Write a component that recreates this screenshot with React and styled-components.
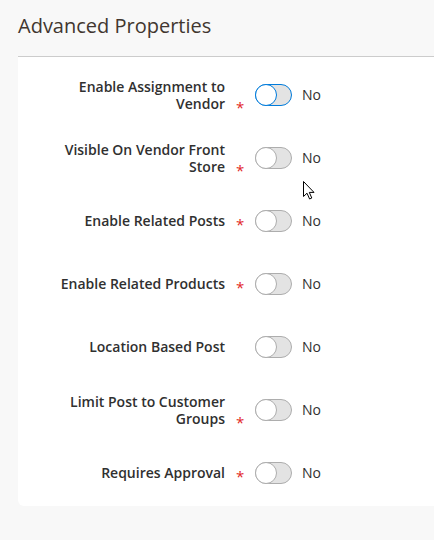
import React from "react";
import styled, { createGlobalStyle, css } from "styled-components";

const GlobalStyle = createGlobalStyle`
  html, body {
    margin: 0;
    padding: 0;
    background: #f8f8f8;
  }
  body {
    font-family: "Open Sans", "Liberation Sans", sans-serif;
    color: #303030;
  }
`;

const Page = styled.div`
  position: relative;
  width: 434px;
  height: 540px;
  padding-left: 18px;
  box-sizing: border-box;
  overflow: hidden;
`;

const Title = styled.h2`
  margin: 0;
  height: 57px;
  box-sizing: border-box;
  padding-top: 12px;
  font-size: 20px;
  font-weight: 400;
  line-height: 28px;
  color: #41362f;
  border-bottom: 1px solid #cccccc;
`;

const Card = styled.div`
  background: #ffffff;
  border-bottom-left-radius: 6px;
  padding: 6px 0 2px 0;
`;

const Row = styled.div`
  display: flex;
  align-items: center;
  height: 63px;
`;

const LabelGroup = styled.div`
  display: flex;
  align-items: flex-end;
  margin-left: 30px;
`;

const Label = styled.label`
  width: 177px;
  text-align: right;
  font-size: 14px;
  font-weight: 600;
  line-height: 17px;
  color: #303030;
`;

const Required = styled.span`
  width: 30px;
  box-sizing: border-box;
  padding-left: 11px;
  font-size: 15px;
  line-height: 17px;
  color: #e22626;
  transform: translateY(4px);
`;

const Switch = styled.span`
  position: relative;
  display: inline-block;
  width: 37px;
  height: 22px;
  box-sizing: border-box;
  border: 1px solid #adadad;
  border-radius: 12px;
  background: #e3e3e3;

  &::before {
    content: "";
    position: absolute;
    left: -1px;
    top: -1px;
    width: 22px;
    height: 22px;
    box-sizing: border-box;
    border-radius: 50%;
    border: 1px solid #adadad;
    background: #ffffff;
  }

  ${(props) =>
    props.focused &&
    css`
      border-color: #007bdb;
      &::before {
        border-color: #007bdb;
      }
    `}
`;

const Value = styled.span`
  margin-left: 10px;
  font-size: 14px;
  line-height: 17px;
  color: #303030;
`;

const Cursor = styled.svg`
  position: absolute;
  left: 303px;
  top: 181px;
  width: 12px;
  height: 19px;
`;

const fields = [
  { label: "Enable Assignment to Vendor", required: true, focused: true },
  { label: "Visible On Vendor Front Store", required: true },
  { label: "Enable Related Posts", required: true },
  { label: "Enable Related Products", required: true },
  { label: "Location Based Post", required: false },
  { label: "Limit Post to Customer Groups", required: true },
  { label: "Requires Approval", required: true },
];

export default function App() {
  return (
    <>
      <GlobalStyle />
      <Page>
        <Title>Advanced Properties</Title>
        <Card>
          {fields.map((f) => (
            <Row key={f.label}>
              <LabelGroup>
                <Label>{f.label}</Label>
                <Required>{f.required ? "*" : ""}</Required>
              </LabelGroup>
              <Switch focused={f.focused} />
              <Value>No</Value>
            </Row>
          ))}
        </Card>
        <Cursor viewBox="0 0 12 19">
          <path
            d="M0.5 0.5 L0.5 15.5 L4 12.2 L6.6 18 L8.8 17 L6.3 11.4 L11 11.4 Z"
            fill="#ffffff"
            stroke="#000000"
            strokeWidth="1"
            strokeLinejoin="miter"
          />
        </Cursor>
      </Page>
    </>
  );
}
